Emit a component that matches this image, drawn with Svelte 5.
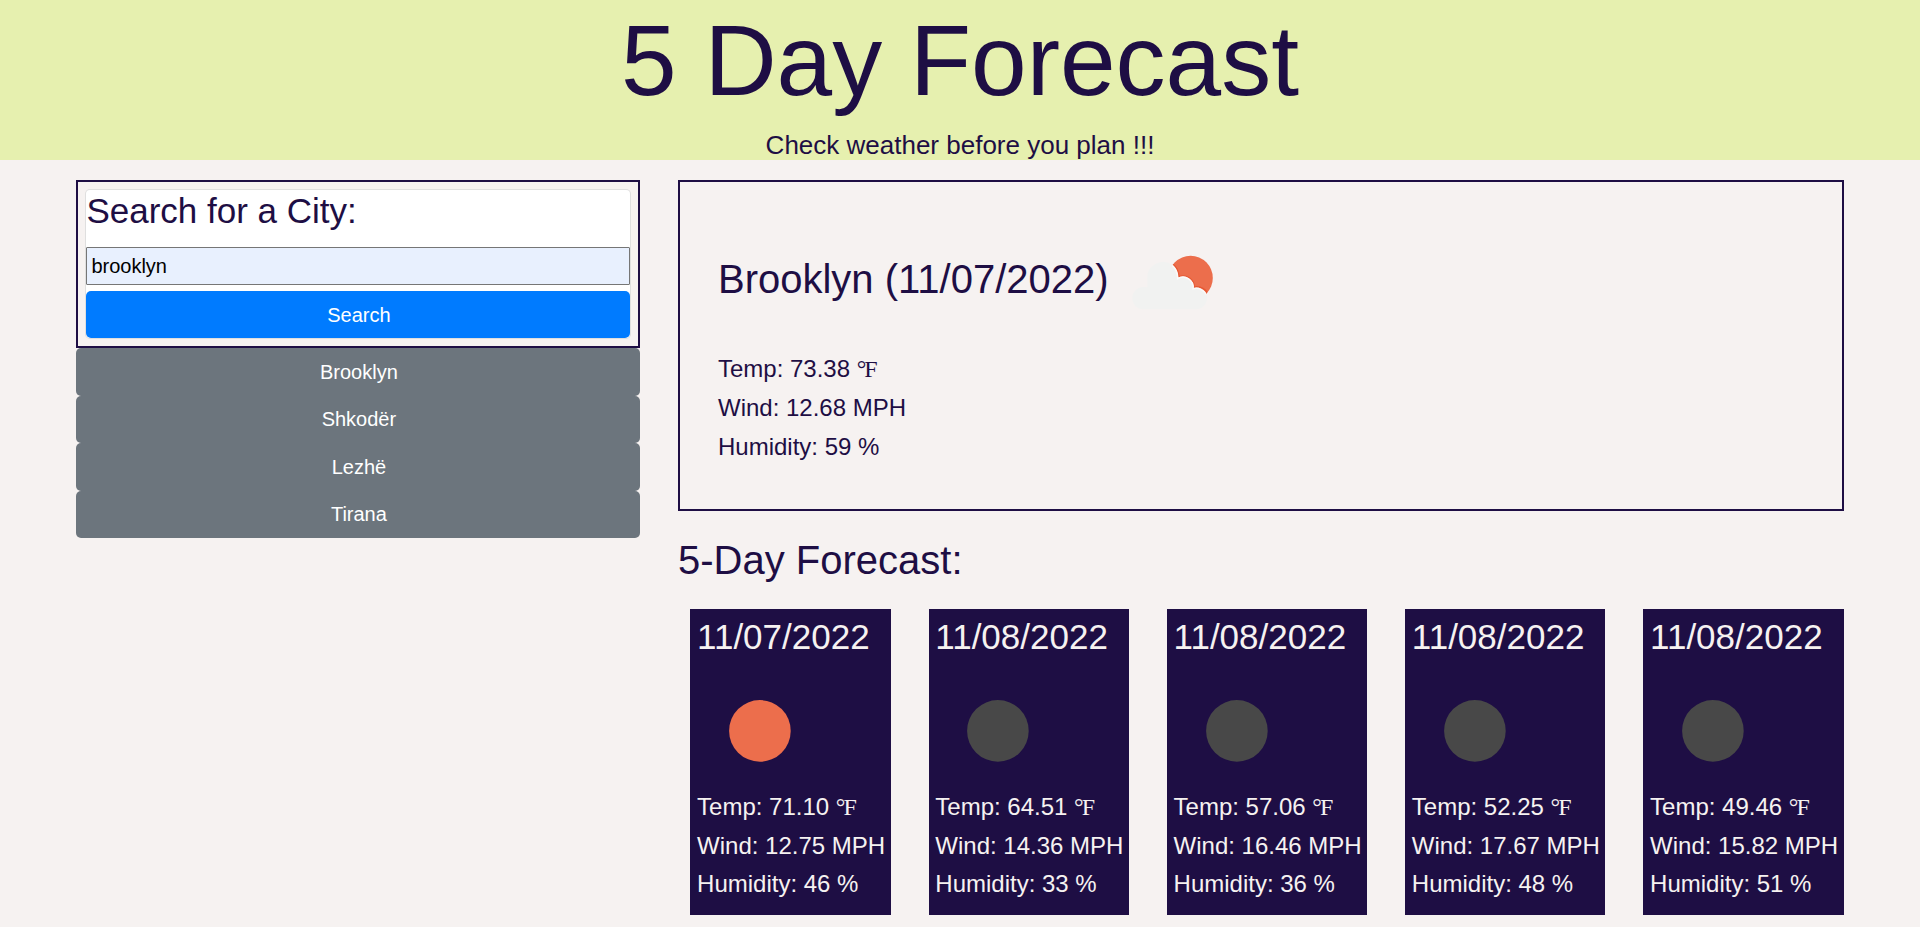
<script>
  let city = $state('brooklyn');
  const history = ['Brooklyn', 'Shkodër', 'Lezhë', 'Tirana'];
  const current = { name: 'Brooklyn', date: '11/07/2022', temp: '73.38', wind: '12.68', humidity: 59 };
  const days = [
    { date: '11/07/2022', icon: 'day', temp: '71.10', wind: '12.75', humidity: 46 },
    { date: '11/08/2022', icon: 'night', temp: '64.51', wind: '14.36', humidity: 33 },
    { date: '11/08/2022', icon: 'night', temp: '57.06', wind: '16.46', humidity: 36 },
    { date: '11/08/2022', icon: 'night', temp: '52.25', wind: '17.67', humidity: 48 },
    { date: '11/08/2022', icon: 'night', temp: '49.46', wind: '15.82', humidity: 51 }
  ];
</script>

<header>
  <h1>5 Day Forecast</h1>
  <p>Check weather before you plan !!!</p>
</header>

<main>
  <aside>
    <div class="search-box">
      <form class="search-card" onsubmit={(e) => e.preventDefault()}>
        <h3>Search for a City:</h3>
        <input type="text" bind:value={city} aria-label="City" />
        <button class="btn primary" type="submit">Search</button>
      </form>
    </div>
    {#each history as name}
      <button class="btn secondary" type="button">{name}</button>
    {/each}
  </aside>

  <section class="weather">
    <div class="today">
      <div class="today-head">
        <h2>{current.name} ({current.date})</h2>
        <svg class="today-icon" viewBox="0 0 110 80" width="110" height="80" aria-hidden="true">
          <defs>
            <clipPath id="sun"><circle cx="70.6" cy="38" r="22.2" /></clipPath>
            <filter id="soft" x="-20%" y="-20%" width="140%" height="140%"><feGaussianBlur stdDeviation="0.6" /></filter>
          </defs>
          <circle cx="70.6" cy="38" r="22.2" fill="#ec6e4c" />
          <g clip-path="url(#sun)">
            <path
              d="M51.5 23.8A17 17 0 0 1 58.5 37.5A10.9 10.9 0 0 1 73.8 47.6A11.5 11.5 0 0 1 88 56"
              fill="none" stroke="#e4502a" stroke-width="2.4" opacity="0.7" filter="url(#soft)"
            />
          </g>
          <path
            d="M23.5 69.3A11.2 11.2 0 0 1 23.5 46.9C25 46.9 26 47 27.3 47.3V38.6A16 16 0 0 1 53 25.3A17 17 0 0 1 58.3 37.6A10.7 10.7 0 0 1 73.6 47.9A11.4 11.4 0 0 1 86.6 54.6C88.6 61.5 84 69.3 76.5 69.3Z"
            fill="#f1f2f1"
          />
          <g clip-path="url(#sun)">
            <path
              d="M51.3 24.6A17 17 0 0 1 57.7 38.6A10.3 10.3 0 0 1 73.1 48.9A10.8 10.8 0 0 1 86.6 55.6"
              fill="none" stroke="#fbfaf9" stroke-width="1.5" filter="url(#soft)"
            />
          </g>
        </svg>
      </div>
      <p>Temp: {current.temp} <span class="unit">°F</span></p>
      <p>Wind: {current.wind} MPH</p>
      <p>Humidity: {current.humidity} %</p>
    </div>

    <h2 class="forecast-title">5-Day Forecast:</h2>

    <div class="days">
      {#each days as day}
        <article>
          <h3>{day.date}</h3>
          <svg viewBox="0 0 125 125" width="125" height="125" aria-hidden="true">
            <circle cx="62.9" cy="62.9" r="30.8" fill={day.icon === 'day' ? '#ec6e4c' : '#484848'} />
          </svg>
          <p>Temp: {day.temp} <span class="unit">°F</span></p>
          <p>Wind: {day.wind} MPH</p>
          <p>Humidity: {day.humidity} %</p>
        </article>
      {/each}
    </div>
  </section>
</main>

<style>
  :global(body) {
    margin: 0;
    background: #f6f2f1;
    color: #1e0e44;
    font-family: 'Liberation Sans', Arial, sans-serif;
    font-size: 20px;
    line-height: 1.5;
  }
  h1, h2, h3, p { margin: 0; font-weight: 400; }
  header { height: 160px; background: #e6f0af; text-align: center; }
  h1 { font-size: 100px; line-height: 120px; padding-bottom: 10px; }
  header p { font-size: 26px; line-height: 30px; }
  main {
    display: grid;
    grid-template-columns: 564px 1166px;
    column-gap: 37.6px;
    padding: 20px 76px 0 76.4px;
  }
  .search-box { border: 2px solid #1e0e44; padding: 7px; height: 168.2px; box-sizing: border-box; }
  .search-card {
    display: flex;
    flex-direction: column;
    box-sizing: border-box;
    height: 150px;
    background: #fff;
    border: 1px solid rgba(0, 0, 0, 0.125);
    border-radius: 5px;
  }
  h3 { font-size: 35px; line-height: 42px; }
  .search-card h3 { margin-bottom: 15px; }
  input {
    box-sizing: border-box;
    height: 38px;
    margin: 0 0 6px;
    padding: 1px 4px;
    border: 1px solid #767676;
    border-radius: 1px;
    background: #e8f0fe;
    color: #000;
    font: 20px 'Liberation Sans', Arial, sans-serif;
  }
  .btn {
    display: block;
    box-sizing: border-box;
    width: 100%;
    height: 47.5px;
    padding: 0 0 0 1px;
    border: 0;
    border-radius: 5px;
    color: #fff;
    font: 20px/30px 'Liberation Sans', Arial, sans-serif;
  }
  .primary { height: 47px; flex: none; background: #007bff; }
  .secondary { background: #6c757d; }
  .today {
    box-sizing: border-box;
    height: 331px;
    border: 2px solid #1e0e44;
    padding: 58px 38px 0;
  }
  .today-head { display: flex; height: 109px; }
  h2 { font-size: 40px; line-height: 48px; }
  .today-head h2 { padding-top: 15px; }
  .today-icon { margin-left: 11px; }
  .today p { font-size: 24px; line-height: 39px; }
  .unit {
    font-family: 'Liberation Serif', 'Times New Roman', serif;
    line-height: 1;
    letter-spacing: -2px;
  }
  .forecast-title { margin-top: 25px; }
  .days {
    display: grid;
    grid-template-columns: repeat(5, 1fr);
    column-gap: 37.95px;
    margin: 25px 0.3px 0 12.4px;
  }
  article {
    box-sizing: border-box;
    height: 306px;
    padding: 7px 0 0 6.7px;
    background: #1e0e44;
    color: #f6f2f1;
    white-space: nowrap;
  }
  article svg { display: block; margin: 10px 0 -5px; }
  article p { font-size: 24px; line-height: 38.5px; }
</style>
